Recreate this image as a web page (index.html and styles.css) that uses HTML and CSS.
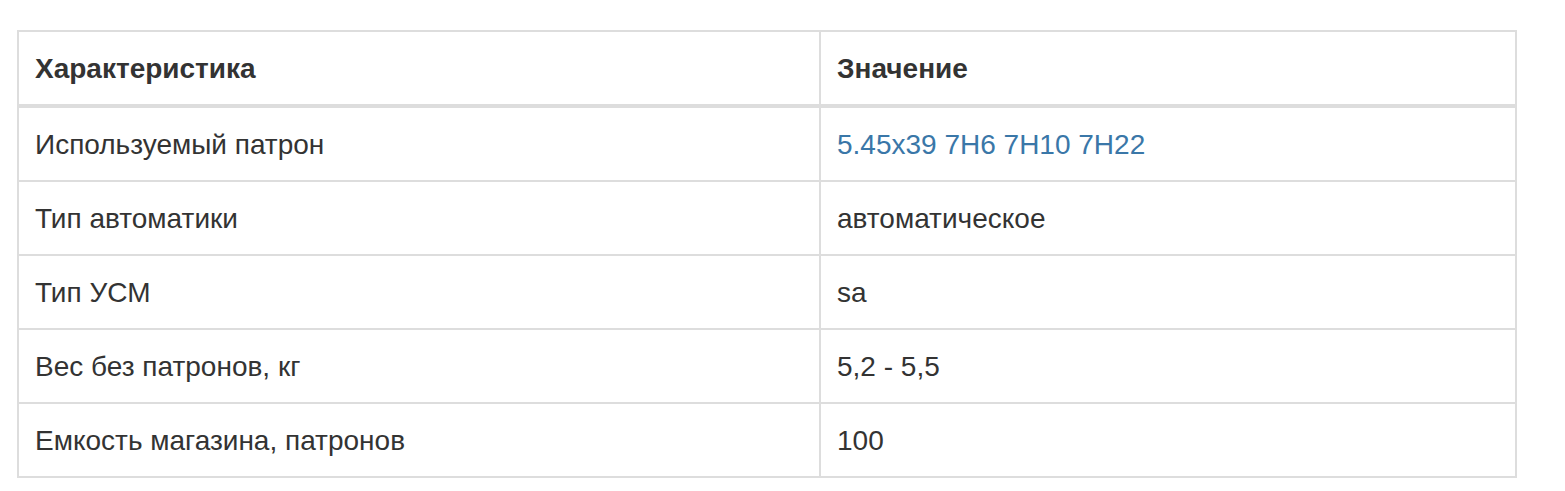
FILE: index.html
```html
<!DOCTYPE html>
<html lang="ru">
<head>
<meta charset="utf-8">
<title>Характеристики</title>
<link rel="stylesheet" href="styles.css">
</head>
<body>
<div class="wrap">
  <table class="specs">
    <colgroup>
      <col class="col-name">
      <col class="col-value">
    </colgroup>
    <thead>
      <tr><th>Характеристика</th><th>Значение</th></tr>
    </thead>
    <tbody>
      <tr><td>Используемый патрон</td><td><a href="#" class="link">5.45x39 7Н6 7Н10 7Н22</a></td></tr>
      <tr><td>Тип автоматики</td><td>автоматическое</td></tr>
      <tr><td>Тип УСМ</td><td>sa</td></tr>
      <tr><td>Вес без патронов, кг</td><td>5,2 - 5,5</td></tr>
      <tr><td>Емкость магазина, патронов</td><td>100</td></tr>
    </tbody>
  </table>
</div>
</body>
</html>
```

FILE: styles.css
```css
html, body {
  margin: 0;
  padding: 0;
  background: #fff;
}
body {
  font-family: "Liberation Sans", Arial, sans-serif;
  font-size: 28px;
  color: #333;
}
.wrap {
  padding: 30px 0 0 17px;
}
.specs {
  width: 1500px;
  border-collapse: collapse;
  border: 2px solid #ddd;
  table-layout: fixed;
}
.col-name { width: 802px; }
.specs th,
.specs td {
  border: 2px solid #ddd;
  padding: 17px 16px 15px;
  line-height: 40px;
  text-align: left;
  vertical-align: top;
}
.specs th {
  font-weight: bold;
  border-bottom-width: 4px;
}
.link {
  color: #3a77a8;
  text-decoration: none;
}
```
